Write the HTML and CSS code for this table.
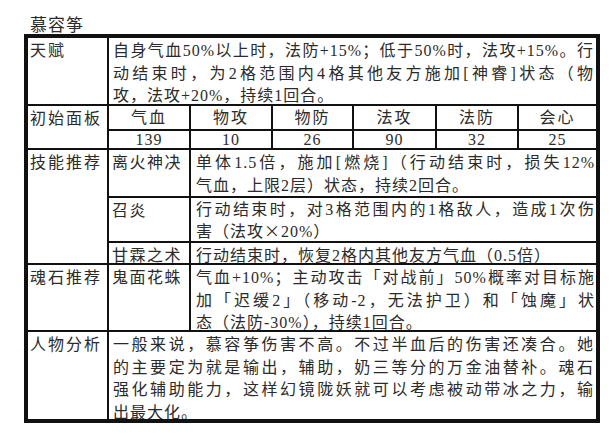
FILE: index.html
```html
<!DOCTYPE html>
<html lang="zh-CN">
<head>
<meta charset="utf-8">
<title>慕容筝</title>
<link rel="stylesheet" href="styles.css">
</head>
<body>
<div class="title">慕容筝</div>
<div class="sheet">
  <div class="cell label">天赋</div>
  <div class="cell text wide">
    <span class="ln j">自身气血50%以上时，法防+15%；低于50%时，法攻+15%。行</span>
    <span class="ln j">动结束时，为2格范围内4格其他友方施加[神睿]状态（物</span>
    <span class="ln">攻，法攻+20%，持续1回合。</span>
  </div>

  <div class="cell label span2">初始面板</div>
  <div class="cell stat-h">气血</div>
  <div class="cell stat-h">物攻</div>
  <div class="cell stat-h">物防</div>
  <div class="cell stat-h">法攻</div>
  <div class="cell stat-h">法防</div>
  <div class="cell stat-h">会心</div>
  <div class="cell stat-v">139</div>
  <div class="cell stat-v">10</div>
  <div class="cell stat-v">26</div>
  <div class="cell stat-v">90</div>
  <div class="cell stat-v">32</div>
  <div class="cell stat-v">25</div>

  <div class="cell label span3">技能推荐</div>
  <div class="cell name">离火神决</div>
  <div class="cell text desc">
    <span class="ln j">单体1.5倍，施加[燃烧]（行动结束时，损失12%</span>
    <span class="ln">气血，上限2层）状态，持续2回合。</span>
  </div>
  <div class="cell name">召炎</div>
  <div class="cell text desc tight">
    <span class="ln j">行动结束时，对3格范围内的1格敌人，造成1次伤</span>
    <span class="ln">害（法攻<span class="cjk">×</span>20%）</span>
  </div>
  <div class="cell name">甘霖之术</div>
  <div class="cell text desc">
    <span class="ln">行动结束时，恢复2格内其他友方气血（0.5倍）</span>
  </div>

  <div class="cell label">魂石推荐</div>
  <div class="cell name">鬼面花蛛</div>
  <div class="cell text desc">
    <span class="ln j">气血+10%；主动攻击「对战前」50%概率对目标施</span>
    <span class="ln j">加「迟缓2」（移动-2，无法护卫）和「蚀魔」状</span>
    <span class="ln">态（法防-30%），持续1回合。</span>
  </div>

  <div class="cell label">人物分析</div>
  <div class="cell text wide">
    <span class="ln j">一般来说，慕容筝伤害不高。不过半血后的伤害还凑合。她</span>
    <span class="ln j">的主要定为就是输出，辅助，奶三等分的万金油替补。魂石</span>
    <span class="ln j">强化辅助能力，这样幻镜陇妖就可以考虑被动带冰之力，输</span>
    <span class="ln">出最大化。</span>
  </div>
</div>
</body>
</html>
```

FILE: styles.css
```css
html, body {
  margin: 0;
  padding: 0;
  background: #ffffff;
}

body {
  width: 615px;
  height: 448px;
  overflow: hidden;
  font-family: "Liberation Serif", "Noto Sans CJK SC", serif;
  color: #2b2b2b;
}

.title {
  height: 34px;
  box-sizing: border-box;
  padding: 16px 0 0 30px;
  font-size: 17px;
  line-height: 19px;
  letter-spacing: 1px;
}

.sheet {
  margin-left: 24px;
  width: 568px;
  border: 4px solid #111111;
  background: #111111;
  display: grid;
  grid-template-columns: 79px 80px 80px 79px 81px 80px 77px;
  grid-template-rows: 66px 23px 17px 46px 43px 20px 65px 87px;
  gap: 2px;
  font-size: 16px;
  line-height: 22.5px;
  letter-spacing: 1px;
}

.cell {
  background: #ffffff;
  overflow: hidden;
  padding: 2px 2px 0 3px;
  min-width: 0;
}

.label {
  padding-left: 2px;
  letter-spacing: 2px;
}

.span2 {
  grid-row: span 2;
}

.span3 {
  grid-row: span 3;
}

.wide {
  grid-column: 2 / -1;
  padding-left: 4px;
  padding-right: 2px;
}

.desc {
  grid-column: 3 / -1;
  padding-left: 5px;
  padding-right: 1px;
}

.tight {
  padding-top: 1px;
  line-height: 21px;
}

.name {
  letter-spacing: 1.5px;
}

.stat-h {
  padding: 0;
  text-align: center;
  line-height: 23px;
  letter-spacing: 2px;
}

.stat-v {
  padding: 0;
  text-align: center;
  line-height: 17px;
}

.ln {
  display: block;
}

.j {
  text-align: justify;
  text-align-last: justify;
}

.cjk {
  font-family: "Noto Sans CJK SC", sans-serif;
}
```
